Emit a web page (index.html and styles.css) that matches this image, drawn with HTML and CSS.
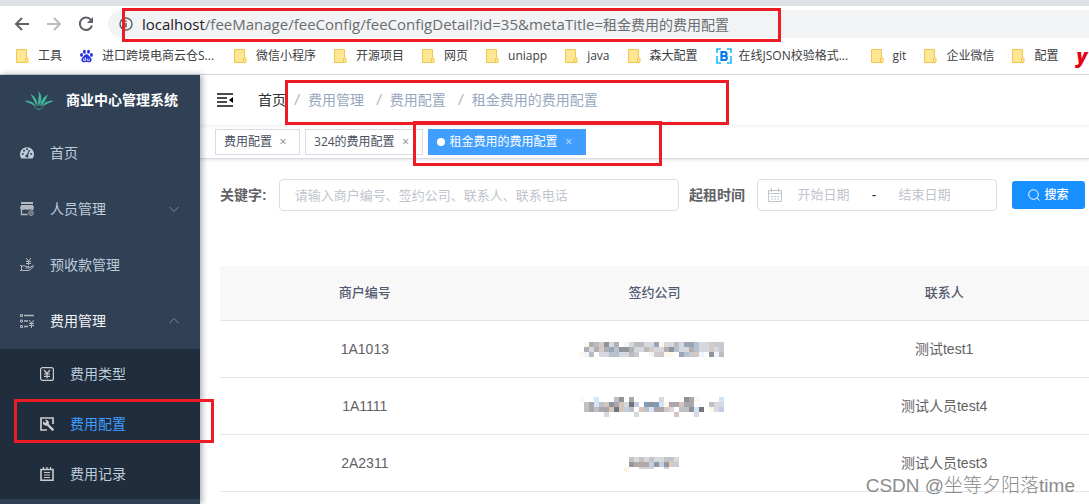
FILE: index.html
```html
<!DOCTYPE html>
<html lang="zh-CN">
<head>
<meta charset="utf-8">
<meta name="viewport" content="width=device-width, initial-scale=1">
<title>商业中心管理系统</title>
<link rel="stylesheet" href="styles.css">
</head>
<body>
<svg class="defs" aria-hidden="true">
  <symbol id="folder" viewBox="0 0 13 14"><path d="M.5.500h10v8.500h1.500v4.500H.5z" fill="#ffe694" stroke="#edc94f"/><path d="M9.500 9v4.500" stroke="#edc94f" fill="none"/></symbol>
  <symbol id="chevron" viewBox="0 0 12 12"><path d="M1.500 4 6 8.500 10.500 4" fill="none" stroke="currentColor"/></symbol>
</svg>

<header class="browser">
  <div class="tabstrip"></div>
  <div class="toolbar">
    <button class="nav-btn" aria-label="后退"><svg viewBox="0 0 16 16"><path d="M15 8H2M8 2 2 8l6 6" fill="none" stroke="#5f6368" stroke-width="2"/></svg></button>
    <button class="nav-btn" aria-label="前进"><svg viewBox="0 0 16 16"><path d="M1 8h13M8 2l6 6-6 6" fill="none" stroke="#babcbe" stroke-width="2"/></svg></button>
    <button class="nav-btn" aria-label="刷新"><svg viewBox="0 0 16 16"><path d="M13 4A6.200 6.200 0 1 0 14 9.500" fill="none" stroke="#5f6368" stroke-width="2"/><path d="M15 1v6H9z" fill="#5f6368"/></svg></button>
    <div class="omnibox">
      <svg class="info" viewBox="0 0 14 14"><circle cx="7" cy="7" r="6" fill="none" stroke="#5f6368" stroke-width="1.500"/><path d="M7 6v4.500M7 3.500V5" stroke="#5f6368" stroke-width="1.600"/></svg>
      <span class="url"><b>localhost</b>/feeManage/feeConfig/feeConfigDetail?id=35&amp;metaTitle=<span class="url-cn">租金费用的费用配置</span></span>
    </div>
  </div>
  <nav class="bookmarks" aria-label="书签">
    <a href="#"><svg><use href="#folder"/></svg>工具</a>
    <a href="#"><svg viewBox="0 0 14 14" fill="#2932e1"><ellipse cx="4.700" cy="2.400" rx="1.600" ry="2.200"/><ellipse cx="9.200" cy="2.400" rx="1.600" ry="2.200"/><ellipse cx="1.700" cy="5.800" rx="1.600" ry="2"/><ellipse cx="12.300" cy="5.800" rx="1.600" ry="2"/><path d="M7 5.200c2 0 2.600 2 4 3.200 2.800 2.400 1.400 5.400-1 5.400-1.500 0-1.800-.3-3-.3s-1.500.3-3 .3c-2.400 0-3.800-3-1-5.400C4.400 7.200 5 5.200 7 5.200z"/><path d="M6 8.500v3.500H4.500a1 1 0 0 1 0-2H6M8 9.800V12h2V9.800" fill="none" stroke="#fff" stroke-width=".8"/></svg><span class="long">进口跨境电商云仓S...</span></a>
    <a href="#"><svg><use href="#folder"/></svg>微信小程序</a>
    <a href="#"><svg><use href="#folder"/></svg>开源项目</a>
    <a href="#"><svg><use href="#folder"/></svg>网页</a>
    <a href="#"><svg><use href="#folder"/></svg>uniapp</a>
    <a href="#"><svg><use href="#folder"/></svg>java</a>
    <a href="#"><svg><use href="#folder"/></svg>森大配置</a>
    <a href="#"><svg class="wide" viewBox="0 0 16 16" fill="none" stroke="#18b8ff" stroke-width="1.600"><path d="M5 1H1v4M11 1h4v4M1 8v7h4M15 8v7h-4"/><path d="M5.500 4v8h3.300a2 2 0 0 0 0-4H5.500h3a2 2 0 0 0 0-4H4.500" stroke="#087bea" stroke-width="2.200"/></svg><span class="long">在线JSON校验格式...</span></a>
    <a href="#"><svg><use href="#folder"/></svg>git</a>
    <a href="#"><svg><use href="#folder"/></svg>企业微信</a>
    <a href="#"><svg><use href="#folder"/></svg>配置</a>
    <a class="youdao" href="#">y</a>
  </nav>
</header>

<div class="app">
  <aside class="sidebar">
    <a class="brand" href="#">
      <svg viewBox="0 0 30 20" fill="#42b598"><path d="M15 16C12.500 11 16.500 5 14 1c4 3 4.500 9 1 15z"/><path d="M13.500 16.500C10 12 9 8 6.500 4c4.500 2 7.500 7 7 12.500zM16.500 16.500c0-6 3-9.500 7.500-12-2 4-3 8-7.500 12z"/><path d="M12 17C9 14.500 5 13 .5 11c5-.8 10 1.500 11.500 6zM18 17c1.500-4.500 6.500-6.800 11.500-6-4.500 2-8.500 3.500-11.500 6z"/><path d="m9 17 6 2 6-2-6 3z"/></svg>
      <strong>商业中心管理系统</strong>
    </a>
    <nav class="menu">
      <a class="item" href="#"><svg viewBox="0 0 14 14"><path d="M1.500 12.500A7 7 0 1 1 12.500 12.500z" fill="#bfcbd9"/><g fill="#304156"><circle cx="2.800" cy="8" r="1"/><circle cx="4" cy="4.800" r="1"/><circle cx="7" cy="3.300" r="1"/><circle cx="11.200" cy="8" r="1"/><circle cx="7" cy="10" r="1.600"/></g><path d="m7 10 2.500-6" stroke="#304156" stroke-width="1.200"/></svg><span>首页</span></a>
      <a class="item" href="#"><svg viewBox="0 0 14 14" fill="none" stroke="#b4b8bf"><path d="M1 1h12" stroke-width="2"/><path d="M1 3h12l1 3-1 1.500H1L0 6z" fill="#b4b8bf" stroke="none"/><path d="M1.500 7v5.500h6M12.500 7v1" stroke-width="1.300"/><circle cx="11" cy="11" r="2.300"/><path d="M10 11h2M3 6v2M7 6v2M11 6v1"/></svg><span>人员管理</span><svg class="arrow"><use href="#chevron"/></svg></a>
      <a class="item" href="#"><svg viewBox="0 0 14 14" fill="none" stroke="#b4b8bf"><path d="m6 0 2.500 3L11 0M8.500 3v4M6 3.500h5M6 5.500h5M0 7.500h1.500v5H0M2 8.500q2-2 4 0h3v1.500H5.500M9 10l4-2.500q1 .5 0 1.500l-4 3.500H2"/></svg><span>预收款管理</span></a>
      <a class="item open" href="#"><svg viewBox="0 0 14 14" fill="none" stroke="#b4b8bf"><path d="M.5.500h2v2h-2zM.5 6h2v2h-2zM.5 11.500h2v2h-2z"/><path d="M4 1.500h10M4 7h4M4 12.500h4" stroke-width="1.600"/><path d="m9 6 2.500 3L14 6M11.500 9v5M9 9.500h5M9 11.500h5"/></svg><span>费用管理</span><svg class="arrow up"><use href="#chevron"/></svg></a>
      <div class="submenu">
        <a class="item" href="#"><svg viewBox="0 0 14 14" fill="none" stroke="#ccc"><rect x=".6" y=".6" width="12.800" height="12.800" rx="2" stroke-width="1.200"/><path d="m4 3 3 3.500L10 3M7 6.500V11.500M4 7h6M4 9.300h6" stroke-width="1.200"/></svg><span>费用类型</span></a>
        <a class="item active" href="#"><svg viewBox="0 0 14 14" fill="none" stroke="#ccc"><path d="M7 13H1V1h12v6" stroke-width="1.700"/><path d="m7 7 6.300 6.300" stroke-width="2.400"/><path d="M3.300 4.200 5 6l1.500-1.500L4.800 2.900A3 3 0 1 1 3.300 4.200z" fill="#ccc" stroke="none"/></svg><span>费用配置</span></a>
        <a class="item" href="#"><svg viewBox="0 0 14 14" fill="none" stroke="#ccc"><path d="M1 2.500h12v10.700H1z" stroke-width="1.600"/><path d="M3.500 0v3M7 0v3M10.500 0v3" stroke-width="1.300"/><path d="M4 5.500h6M4 8h6M4 10.500h6"/></svg><span>费用记录</span></a>
      </div>
    </nav>
  </aside>

  <main class="main">
    <div class="navbar">
      <button class="fold" aria-label="收起菜单"><svg viewBox="0 0 16 14"><path d="M0 1h16M0 5h10M0 9h10M0 13h16" stroke="#111" stroke-width="1.600"/><path d="M16 4v6l-4-3z"/></svg></button>
      <nav class="crumbs"><a href="#">首页</a><i>/</i><span>费用管理</span><i>/</i><span>费用配置</span><i>/</i><span>租金费用的费用配置</span></nav>
    </div>
    <div class="tags">
      <a class="tag" href="#">费用配置<span class="close">×</span></a>
      <a class="tag" href="#">324的费用配置<span class="close">×</span></a>
      <a class="tag current" href="#">租金费用的费用配置<span class="close">×</span></a>
    </div>
    <section class="content">
      <form class="filters">
        <label for="keyword">关键字:</label>
        <input id="keyword" class="keyword" type="text" placeholder="请输入商户编号、签约公司、联系人、联系电话">
        <label for="start">起租时间</label>
        <div class="range">
          <svg viewBox="0 0 14 14" fill="none" stroke="#c0c4cc"><path d="M.5 2.500h13v11H.5zM.5 5.500h13M3.500 0v4M10.500 0v4"/><path d="M3 8.500h8M3 11h8" stroke-dasharray="2 1"/></svg>
          <input id="start" type="text" placeholder="开始日期"><span>-</span><input type="text" aria-label="结束日期" placeholder="结束日期">
        </div>
        <button class="search" type="button"><svg viewBox="0 0 12 12" fill="none" stroke="#fff"><circle cx="5.500" cy="5.500" r="4.800"/><path d="m9 9 2.500 2.500"/></svg>搜索</button>
      </form>
      <table>
        <thead><tr><th>商户编号</th><th>签约公司</th><th>联系人</th></tr></thead>
        <tbody>
          <tr><td>1A1013</td><td>
            <svg class="mosaic" viewBox="0 0 150 20" role="img" aria-label="已遮盖" stroke-width="5" fill="none">
              <path stroke="#fff7e8" d="M5 5.500h5M0 15.500h5M80 5.500h5M85 15.500h10"/>
              <path stroke="#919599" d="M25 5.500h5M40 10.500h10M90 10.500h5M130 15.500h5"/>
              <path stroke="#b3afb1" d="M10 5.500h5M35 5.500h5M5 10.500h5M15 10.500h5M25 10.500h5M50 10.500h5M85 10.500h5M110 10.500h5"/>
              <path stroke="#bbb" d="M15 5.500h5M10 15.500h5M50 15.500h5M55 5.500h10M95 5.500h5M65 10.500h5M140 15.500h5"/>
              <path stroke="#9aa4b8" d="M75 5.500h5M105 5.500h10M30 10.500h5M100 15.500h5"/>
              <path stroke="#b7c0ce" d="M30 15.500h10M35 10.500h5M95 10.500h5M115 10.500h5M105 15.500h5M115 5.500h5"/>
              <path stroke="#d5d9df" d="M30 5.500h5M50 5.500h5M65 5.500h10M85 5.500h10M100 5.500h5M120 5.500h10M10 10.500h5M55 10.500h10M75 10.500h10M100 10.500h10M120 10.500h10M135 10.500h5M20 15.500h10M40 15.500h10"/>
              <path stroke="#d3cac6" d="M20 5.500h5M130 5.500h5M20 10.500h5M70 10.500h5M75 15.500h5M115 15.500h5M130 10.500h5"/>
              <path stroke="#c8c8ce" d="M135 5.500h10M140 10.500h5M55 15.500h5M80 15.500h5M110 15.500h5"/>
              <path stroke="#edf5fd" d="M5 15.500h5M45 5.500h5M70 15.500h5M120 15.500h5M135 15.500h5"/>
            </svg></td><td>测试test1</td></tr>
          <tr><td>1A1111</td><td>
            <svg class="mosaic" viewBox="0 0 150 20" role="img" aria-label="已遮盖" stroke-width="5" fill="none">
              <path stroke="#fff7eb" d="M0 3.500h5M60 13.500h5M85 8.500h5M130 13.500h5M115 3.500h5"/>
              <path stroke="#74747d" d="M35 13.500h5M50 8.500h5M120 13.500h5"/>
              <path stroke="#8f9298" d="M30 8.500h5M40 3.500h5M105 3.500h5M70 8.500h5M110 13.500h5"/>
              <path stroke="#aaa6ab" d="M10 8.500h5M35 8.500h5M50 3.500h5M75 13.500h10M90 8.500h10M110 3.500h5M20 13.500h10M105 8.500h10M10 13.500h5"/>
              <path stroke="#bfc0c1" d="M5 8.500h5M20 8.500h5M5 13.500h5M15 13.500h5M50 13.500h5M65 13.500h5M100 13.500h10M130 8.500h5M35 3.500h5"/>
              <path stroke="#829aba" d="M65 8.500h5M75 8.500h5"/>
              <path stroke="#c3cbe0" d="M140 13.500h5M55 8.500h5M45 13.500h5"/>
              <path stroke="#d2e4f8" d="M15 3.500h5M15 8.500h5M80 8.500h5M70 13.500h5M140 3.500h5M115 13.500h5"/>
              <path stroke="#d5c5bc" d="M25 8.500h5M40 8.500h5M40 13.500h5M30 13.500h5M60 13.500h5M85 13.500h5M100 8.500h5M95 18.500h5"/>
              <path stroke="#d8d8df" d="M45 8.500h5M90 13.500h5M135 8.500h10M135 13.500h5M55 18.500h5M115 18.500h5M25 18.500h5M80 3.500h5"/>
            </svg></td><td>测试人员test4</td></tr>
          <tr><td>2A2311</td><td>
            <svg class="mosaic" viewBox="0 0 150 20" role="img" aria-label="已遮盖" stroke-width="5" fill="none">
              <path stroke="#c3c4c5" d="M50 6.500h15M70 6.500h5M85 6.500h10"/>
              <path stroke="#d8dad9" d="M55 6.500h5M65 6.500h5M75 6.500h10M95 6.500h5"/>
              <path stroke="#969799" d="M50 11.500h5M75 11.500h5M85 11.500h5"/>
              <path stroke="#b3aaa7" d="M55 11.500h15"/>
              <path stroke="#bfd0e5" d="M70 11.500h5M80 11.500h5M95 11.500h5"/>
              <path stroke="#dbcbbb" d="M90 11.500h5"/><path stroke="#fff5e6" d="M45 16.500h5"/>
              <path stroke="#d3d1d4" stroke-width="2" d="M60 15h15M85 15h5"/>
            </svg></td><td>测试人员test3</td></tr>
        </tbody>
      </table>
    </section>
  </main>
</div>

<div class="mark mark-url"></div>
<div class="mark mark-crumbs"></div>
<div class="mark mark-tag"></div>
<div class="mark mark-menu"></div>
<div class="watermark">CSDN @坐等夕阳落time</div>
</body>
</html>
```
FILE: styles.css
```css
* { box-sizing: border-box; }
body {
  margin: 0;
  min-height: 100vh;
  display: flex;
  flex-direction: column;
  position: relative;
  overflow: hidden;
  background: #fff;
  color: #606266;
  font: 14px/20px "Liberation Sans", "Noto Sans CJK SC", sans-serif;
}
a { color: inherit; text-decoration: none; }
button, input { font: inherit; border: 0; padding: 0; background: none; }
svg { flex: none; display: block; }
.defs { position: absolute; width: 0; height: 0; }

/* Browser chrome */
.browser { border-bottom: 1px solid #dadce0; }
.tabstrip { height: 6px; background: #dee1e6; }
.toolbar { display: flex; align-items: center; gap: 16px; padding: 4px 0 0 14px; }
.nav-btn { width: 16px; height: 16px; }
.nav-btn svg { width: 16px; height: 16px; }
.omnibox {
  flex: 1;
  display: flex;
  align-items: center;
  gap: 9px;
  height: 28px;
  margin-left: -2px;
  padding-left: 11px;
  border-radius: 14px 0 0 14px;
  background: #f1f3f4;
}
.info { width: 14px; height: 14px; }
.url { color: #6a6d71; font-family: "Open Sans", "Noto Sans CJK SC", sans-serif; font-size: 15px; white-space: nowrap; }
.url b { color: #202124; font-weight: 400; }
.url-cn { font-size: 14px; }
.bookmarks {
  display: flex;
  gap: 18px;
  height: 36px;
  padding-left: 16px;
  overflow: hidden;
  color: #3c4043;
  font: 12px/36px "Open Sans", "Noto Sans CJK SC", sans-serif;
  white-space: nowrap;
}
.bookmarks a { display: flex; flex: none; align-items: center; gap: 9px; }
.bookmarks svg { width: 13px; height: 14px; }
.bookmarks .wide { width: 16px; height: 16px; margin-right: -2px; }
.bookmarks .youdao { color: #e60012; font-size: 20px; font-weight: 800; font-style: italic; line-height: 28px; }
.long { width: 114px; }

/* Shell */
.app { flex: 1; display: flex; }
.sidebar {
  flex: none;
  width: 200px;
  z-index: 1;
  background: #304156;
  box-shadow: 2px 0 6px rgba(0, 21, 41, .35);
}
.brand { display: flex; align-items: center; gap: 12px; height: 50px; padding-left: 24px; color: #fff; }
.brand svg { width: 30px; height: 20px; }
.item { display: flex; align-items: center; gap: 16px; height: 56px; padding: 0 20px; color: #bfcbd9; }
.item svg { width: 14px; height: 14px; }
.item .arrow { width: 12px; height: 12px; margin-left: auto; color: #7b8695; }
.item .arrow.up { transform: rotate(180deg); }
.item.open { color: #f4f4f5; }
.submenu { background: #1f2d3d; }
.submenu .item { height: 50px; padding-left: 40px; }
.submenu .item.active { color: #409eff; }

.main { flex: 1; min-width: 0; }
.navbar { display: flex; align-items: center; height: 50px; padding-left: 17px; gap: 25px; box-shadow: 0 1px 4px rgba(0, 21, 41, .08); }
.fold { width: 16px; height: 14px; }
.fold svg { width: 16px; height: 14px; }
.crumbs { display: flex; gap: 9px; color: #97a8be; white-space: nowrap; }
.crumbs a { color: #303133; }
.crumbs span { margin-right: 4px; }
.crumbs i { color: #a8adb8; }
.tags {
  display: flex;
  align-items: center;
  gap: 5px;
  height: 34px;
  padding-left: 15px;
  border-bottom: 1px solid #d8dce5;
  box-shadow: 0 1px 3px rgba(0, 0, 0, .12);
  font: 12px/24px "Open Sans", "Noto Sans CJK SC", sans-serif;
}
.tag { display: flex; align-items: center; gap: 3px; height: 26px; padding: 0 8px; border: 1px solid #d8dce5; color: #495060; white-space: nowrap; }
.tag.current { border-color: #409eff; background: #409eff; color: #fff; }
.tag.current::before { content: ""; width: 8px; height: 8px; margin-right: 2px; border-radius: 50%; background: #fff; }
.close { width: 16px; text-align: center; opacity: .7; }

/* Filters and table */
.content { padding: 20px 0 0 20px; }
.filters { display: flex; align-items: center; height: 32px; }
.filters label { flex: none; font-weight: 700; }
.filters input { min-width: 0; font-size: 13px; color: #606266; }
.filters input::placeholder { color: #c0c4cc; opacity: 1; }
.filters .keyword { flex: 1; height: 32px; margin: 0 10px 0 12px; padding: 0 15px; border: 1px solid #dcdfe6; border-radius: 4px; }
.range { display: flex; align-items: center; flex: none; width: 240px; height: 32px; margin: 0 15px 0 12px; padding: 0 30px 0 10px; border: 1px solid #dcdfe6; border-radius: 4px; color: #303133; }
.range svg { width: 14px; height: 14px; }
.range input { flex: 1; text-align: center; }
.range span { width: 18px; text-align: center; }
.search { display: flex; flex: none; align-items: center; justify-content: center; gap: 4px; width: 73px; height: 28px; margin-right: 4px; border-radius: 3px; background: #1890ff; color: #fff; font-size: 12px; font-weight: 500; }
.search svg { width: 12px; height: 12px; }

table { width: 100%; margin-top: 55px; border-collapse: separate; border-spacing: 0; table-layout: fixed; }
th, td { height: 57px; padding: 0; border-bottom: 1px solid #dfe6ec; text-align: center; }
th { height: 55px; background: #f8f8f9; color: #515a6e; font-size: 13px; font-weight: 500; }
.mosaic { width: 150px; height: 20px; margin: 0 auto; overflow: visible; shape-rendering: crispEdges; }

/* Annotations lying over the page */
.mark { position: absolute; z-index: 2; border: 3px solid #ed1c24; pointer-events: none; }
.mark-url { left: 122px; top: 8px; width: 659px; height: 34px; }
.mark-crumbs { left: 285px; top: 80px; width: 444px; height: 45px; }
.mark-tag { left: 413px; top: 121px; width: 249px; height: 45px; }
.mark-menu { left: 14px; top: 399px; width: 200px; height: 44px; }
.watermark { position: absolute; z-index: 2; right: 14px; bottom: 4px; color: #8b8b8b; font-size: 19px; line-height: 28px; font-weight: 300; }
```
